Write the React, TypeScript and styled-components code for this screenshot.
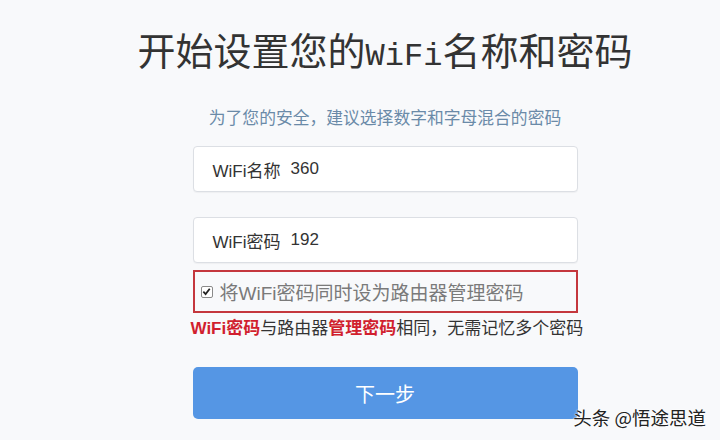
import React from "react";
import styled, { createGlobalStyle } from "styled-components";

const GlobalStyle = createGlobalStyle`
  html, body {
    margin: 0;
    padding: 0;
    background: #f8f9fb;
  }
  body {
    font-family: "Liberation Sans", "Noto Sans CJK SC", sans-serif;
  }
`;

const Page = styled.div`
  position: relative;
  width: 720px;
  height: 440px;
  box-sizing: border-box;
  padding: 27px 0 0 50px;
  display: flex;
  flex-direction: column;
  align-items: center;
  background: #f8f9fb;
  overflow: hidden;
`;

const Title = styled.h1`
  margin: 0;
  font-family: "Noto Sans CJK SC", sans-serif;
  font-weight: 400;
  font-size: 38px;
  line-height: 44px;
  color: #333;
  white-space: nowrap;
`;

const Mono = styled.span`
  font-family: "Liberation Mono", "DejaVu Sans Mono", monospace;
  font-size: 32px;
`;

const Subtitle = styled.p`
  margin: 26px 0 0;
  font-family: "Noto Sans CJK SC", sans-serif;
  font-size: 16.8px;
  line-height: 24px;
  color: #6a8aa8;
  white-space: nowrap;
`;

const Form = styled.div`
  width: 385px;
  margin-top: 17px;
  display: flex;
  flex-direction: column;
`;

const Field = styled.div<{ $gap?: number }>`
  height: 46px;
  box-sizing: border-box;
  margin-top: ${(p) => p.$gap ?? 0}px;
  padding: 0 19px;
  display: flex;
  align-items: center;
  gap: 10px;
  background: #ffffff;
  border: 1px solid #dcdfe4;
  border-radius: 4px;
  box-shadow: 0 1px 1px rgba(0, 0, 0, 0.04);
  font-family: "Liberation Sans", "Noto Sans CJK SC", sans-serif;
  font-size: 17px;
  color: #333;
`;

const SyncBox = styled.label`
  height: 43px;
  box-sizing: border-box;
  margin-top: 7px;
  padding: 0 6px;
  display: flex;
  align-items: center;
  gap: 7px;
  border: 2px solid #c4373d;
  font-family: "Liberation Sans", "Noto Sans CJK SC", sans-serif;
  font-size: 19px;
  color: #7a7a7a;
`;

const Check = styled.span`
  width: 12px;
  height: 12px;
  box-sizing: border-box;
  border: 1px solid #8a8a8a;
  border-radius: 2px;
  background: #fff;
  display: flex;
  align-items: center;
  justify-content: center;
`;

const Note = styled.p`
  margin: 5px 0 0 -2px;
  font-family: "Liberation Sans", "Noto Sans CJK SC", sans-serif;
  font-size: 17px;
  line-height: 22px;
  color: #333;
  white-space: nowrap;
`;

const Em = styled.strong`
  color: #d11f2e;
  font-weight: 700;
`;

const NextButton = styled.button`
  margin-top: 27px;
  height: 52px;
  border: none;
  border-radius: 5px;
  background: #5596e4;
  color: #fff;
  font-family: "Noto Sans CJK SC", sans-serif;
  font-size: 20px;
  cursor: pointer;
`;

const Watermark = styled.div`
  position: absolute;
  right: 14px;
  top: 404px;
  font-family: "Noto Sans CJK SC", sans-serif;
  font-size: 18.5px;
  line-height: 26px;
  color: #222;
  text-shadow: 0 0 2px #fff, 0 0 2px #fff;
`;

export default function App() {
  return (
    <>
      <GlobalStyle />
      <Page>
        <Title>
          开始设置您的<Mono>WiFi</Mono>名称和密码
        </Title>
        <Subtitle>为了您的安全，建议选择数字和字母混合的密码</Subtitle>
        <Form>
          <Field>
            <span>WiFi名称</span>
            <span>360</span>
          </Field>
          <Field $gap={25}>
            <span>WiFi密码</span>
            <span>192</span>
          </Field>
          <SyncBox>
            <Check>
              <svg width="9" height="9" viewBox="0 0 10 10">
                <path d="M1.5 5.2 L4 7.8 L8.6 2" fill="none" stroke="#222" strokeWidth="2" />
              </svg>
            </Check>
            <span>将WiFi密码同时设为路由器管理密码</span>
          </SyncBox>
          <Note>
            <Em>WiFi密码</Em>与路由器<Em>管理密码</Em>相同，无需记忆多个密码
          </Note>
          <NextButton>下一步</NextButton>
        </Form>
        <Watermark>头条 @悟途思道</Watermark>
      </Page>
    </>
  );
}
